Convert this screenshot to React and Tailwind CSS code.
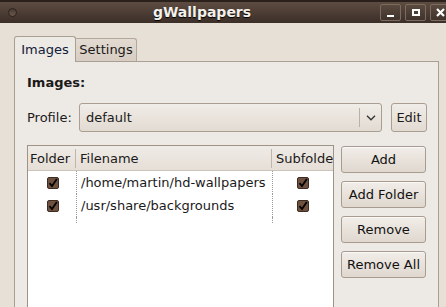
import React from "react";

/* ─── SMALL PIECES ─────────────────────────────────────────── */
const Check = () => (
  <span className="w-[12px] h-[12px] rounded-[2px] border border-[#3d2c22] bg-[#6f5140] flex items-center justify-center">
    <svg width="10" height="10" viewBox="0 0 10 10">
      <path d="M1.5 5.2 L4 8 L8.8 1" fill="none" stroke="#000" strokeWidth="1.8" />
    </svg>
  </span>
);

const Btn = ({ children, className = "" }) => (
  <div
    className={
      "h-[27px] w-[85px] rounded-[3px] border border-[#a79c8f] bg-gradient-to-b from-[#f1ede8] to-[#e0d8cf] flex items-center justify-center text-[#111] shadow-[inset_0_1px_0_#fbf9f7] " +
      className
    }
  >
    {children}
  </div>
);

const WinBtn = ({ children }) => (
  <div className="w-[21px] h-[17px] rounded-[2px] border border-[#7c6b5f] bg-gradient-to-b from-[#5b4a3f] to-[#3f332c] flex items-center justify-center">
    {children}
  </div>
);

const ROWS = [
  { path: "/home/martin/hd-wallpapers" },
  { path: "/usr/share/backgrounds" },
];

/* ─── MAIN ─────────────────────────────────────────────────── */
export default function App() {
  return (
    <div
      className="w-[446px] h-[307px] overflow-hidden bg-[#e7e0d7] text-[13px] text-[#1a1a1a]"
      style={{ fontFamily: '"DejaVu Sans", sans-serif' }}
    >
      {/* title bar */}
      <div className="relative h-[23px] bg-gradient-to-b from-[#5e4c41] to-[#3b2f28] border-t-2 border-[#2a211c] flex items-center">
        <div className="ml-[8px] w-[9px] h-[9px] rounded-full border border-[#2b221d] bg-gradient-to-b from-[#4a3b32] to-[#6a584c]" />
        <div className="absolute inset-0 flex items-center justify-center pr-[42px]">
          <span className="font-bold text-[14px] text-[#f4f0ec] [text-shadow:0_1px_1px_#000]">gWallpapers</span>
        </div>
        <div className="ml-auto mr-[-5px] flex gap-[4px]">
          <WinBtn>
            <span className="mt-[7px] w-[7px] h-[2px] bg-white" />
          </WinBtn>
          <WinBtn>
            <span className="w-[8px] h-[7px] border-2 border-white" />
          </WinBtn>
          <WinBtn>
            <svg width="9" height="9" viewBox="0 0 9 9">
              <path d="M1 1 L8 8 M8 1 L1 8" stroke="#fff" strokeWidth="2.2" />
            </svg>
          </WinBtn>
        </div>
      </div>

      {/* notebook */}
      <div className="pl-[14px] pt-[13px]">
        <div className="flex items-end h-[25px]">
          <div className="h-[26px] w-[62px] border border-b-0 border-[#aa9f93] rounded-t-[3px] bg-[#ede9e4] flex items-center justify-center mb-[-1px] relative z-10 text-[#10203a]">
            Images
          </div>
          <div className="h-[23px] w-[61px] border border-b-0 border-l-0 border-[#b3a89c] rounded-tr-[3px] bg-gradient-to-b from-[#e3dbd2] to-[#d7cdc2] flex items-center justify-center">
            Settings
          </div>
        </div>

        <div className="w-[425px] h-[260px] border border-[#aa9f93] bg-[#ede9e4] pl-[12px] pt-[13px]">
          <div className="font-bold h-[15px] leading-[15px]">Images:</div>

          {/* profile row */}
          <div className="mt-[13px] flex items-center">
            <span className="w-[52px]">Profile:</span>
            <div className="h-[29px] w-[303px] rounded-[3px] border border-[#a99e91] bg-gradient-to-b from-[#f0ece7] to-[#e2dbd2] flex items-center">
              <span className="pl-[6px] flex-1">default</span>
              <span className="w-px h-[19px] bg-[#b9afa3]" />
              <span className="w-[21px] flex justify-center">
                <svg width="10" height="6" viewBox="0 0 10 6">
                  <path d="M1 0.8 L5 4.8 L9 0.8" fill="none" stroke="#333" strokeWidth="1.3" />
                </svg>
              </span>
            </div>
            <div className="ml-[9px] h-[29px] w-[36px] rounded-[3px] border border-[#a99e91] bg-gradient-to-b from-[#f0ece7] to-[#e2dbd2] flex items-center justify-center">
              Edit
            </div>
          </div>

          {/* table + buttons */}
          <div className="mt-[13px] flex">
            <div className="w-[307px] h-[200px] border border-[#9e9385] bg-white overflow-hidden">
              <div className="flex h-[25px] bg-gradient-to-b from-[#efebe6] to-[#e6dfd7] border-b border-[#cdc4b9] items-center">
                <div className="w-[48px] pl-[2px] border-r border-[#bfb5a9] h-[19px] leading-[19px]">Folder</div>
                <div className="w-[196px] pl-[4px] border-r border-[#bfb5a9] h-[19px] leading-[19px]">Filename</div>
                <div className="flex-1 pl-[4px] whitespace-nowrap overflow-hidden h-[19px] leading-[19px]">Subfolder</div>
              </div>
              {ROWS.map((r) => (
                <div key={r.path} className="flex h-[23px] items-center">
                  <div className="w-[48px] flex justify-center pl-[1px]">
                    <Check />
                  </div>
                  <div className="w-[196px] pl-[4px] h-full flex items-center border-l border-dotted border-[#9a9a9a]">
                    {r.path}
                  </div>
                  <div className="flex-1 h-full flex items-center justify-center border-l border-dotted border-[#9a9a9a]">
                    <Check />
                  </div>
                </div>
              ))}
              <div className="flex h-[60px]">
                <div className="w-[48px]" />
                <div className="w-[196px] border-l border-dotted border-[#9a9a9a] h-[6px]" />
                <div className="flex-1 border-l border-dotted border-[#9a9a9a] h-[6px]" />
              </div>
            </div>

            <div className="ml-[7px] flex flex-col gap-[8px]">
              <Btn className="mt-[1px]">Add</Btn>
              <Btn>Add Folder</Btn>
              <Btn>Remove</Btn>
              <Btn>Remove All</Btn>
            </div>
          </div>
        </div>
      </div>
    </div>
  );
}
